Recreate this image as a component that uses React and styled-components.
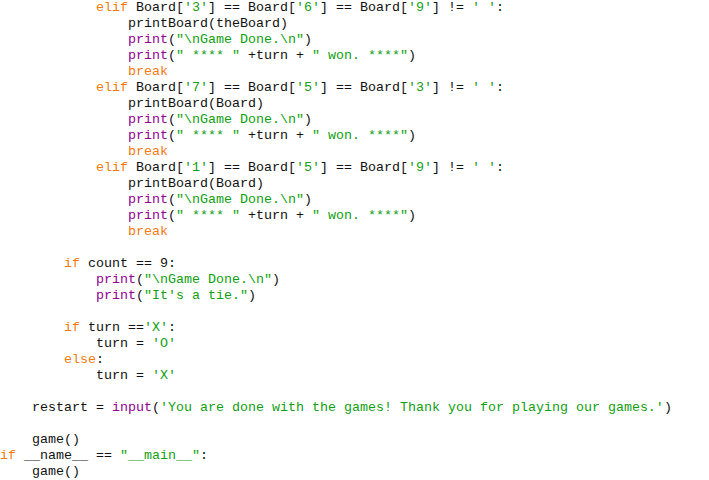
import React from "react";
import styled, { createGlobalStyle } from "styled-components";

const Global = createGlobalStyle`
  html, body { margin: 0; padding: 0; background: #ffffff; }
  body { width: 709px; height: 480px; overflow: hidden; }
`;

const Editor = styled.div`
  display: flex;
  flex-direction: column;
  width: 709px;
  height: 480px;
  background: #ffffff;
  font-family: "Courier New", "Nimbus Mono PS", "Nimbus Mono L", "FreeMono", "Liberation Mono", monospace;
  font-size: 13.333px;
  color: #111111;
`;

const Line = styled.div`
  height: 16px;
  line-height: 16px;
  white-space: pre;
`;

const colors = {
  keyword: "#f57a10",
  builtin: "#900090",
  string: "#11a011",
  plain: "#111111",
};

const Token = styled.span`
  color: ${(p) => colors[p.$kind]};
`;

const source = [
  "            elif Board['3'] == Board['6'] == Board['9'] != ' ':",
  "                printBoard(theBoard)",
  '                print("\\nGame Done.\\n")',
  '                print(" **** " +turn + " won. ****")',
  "                break",
  "            elif Board['7'] == Board['5'] == Board['3'] != ' ':",
  "                printBoard(Board)",
  '                print("\\nGame Done.\\n")',
  '                print(" **** " +turn + " won. ****")',
  "                break",
  "            elif Board['1'] == Board['5'] == Board['9'] != ' ':",
  "                printBoard(Board)",
  '                print("\\nGame Done.\\n")',
  '                print(" **** " +turn + " won. ****")',
  "                break",
  "",
  "        if count == 9:",
  '            print("\\nGame Done.\\n")',
  '            print("It\'s a tie.")',
  "",
  "        if turn =='X':",
  "            turn = 'O'",
  "        else:",
  "            turn = 'X'",
  "",
  "    restart = input('You are done with the games! Thank you for playing our games.')",
  "",
  "    game()",
  'if __name__ == "__main__":',
  "    game()",
];

const KEYWORDS = new Set(["if", "elif", "else", "break"]);
const BUILTINS = new Set(["print", "input"]);

function tokenize(line) {
  const out = [];
  const re = /("(?:[^"\\]|\\.)*"|'(?:[^'\\]|\\.)*'|[A-Za-z_][A-Za-z0-9_]*|\s+|.)/g;
  let m;
  while ((m = re.exec(line))) {
    const t = m[0];
    let kind = "plain";
    if (t[0] === '"' || t[0] === "'") kind = "string";
    else if (KEYWORDS.has(t)) kind = "keyword";
    else if (BUILTINS.has(t)) kind = "builtin";
    const last = out[out.length - 1];
    if (last && last.kind === kind) last.text += t;
    else out.push({ kind, text: t });
  }
  return out;
}

export default function App() {
  return (
    <>
      <Global />
      <Editor>
        {source.map((line, i) => (
          <Line key={i}>
            {line === ""
              ? " "
              : tokenize(line).map((tok, j) => (
                  <Token key={j} $kind={tok.kind}>
                    {tok.text}
                  </Token>
                ))}
          </Line>
        ))}
      </Editor>
    </>
  );
}
